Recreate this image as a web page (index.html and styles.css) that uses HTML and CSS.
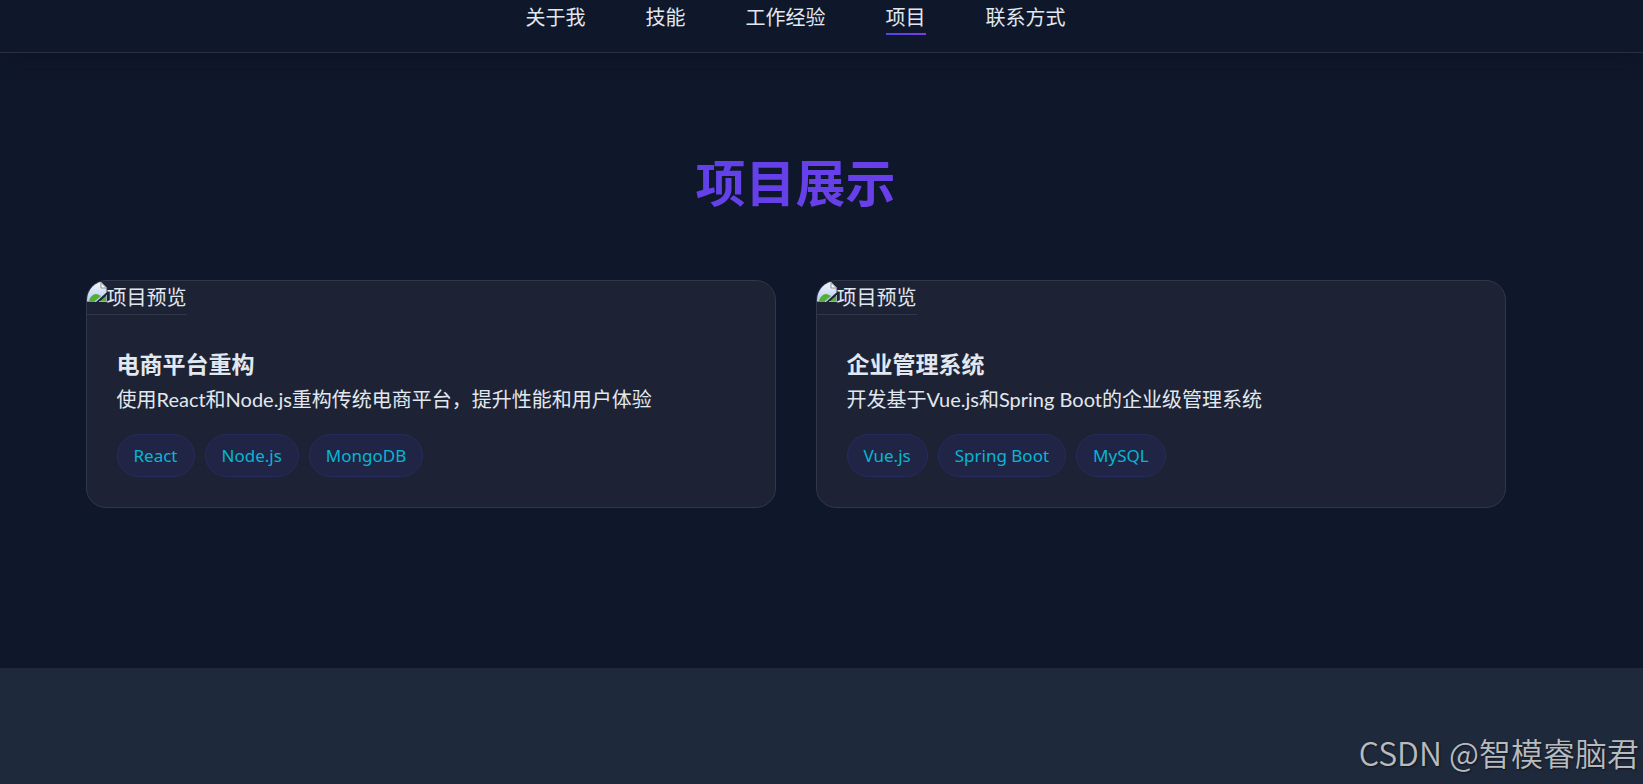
FILE: index.html
```
<!DOCTYPE html>
<html lang="zh-CN">
<head>
    <meta charset="UTF-8">
    <meta name="viewport" content="width=device-width, initial-scale=1.0">
    <title>项目展示</title>
    <link rel="stylesheet" href="styles.css">
</head>
<body>

<!-- 导航栏 -->
<header class="header">
    <nav class="nav">
        <a href="#about">关于我</a>
        <a href="#skills">技能</a>
        <a href="#experience">工作经验</a>
        <a href="#projects" class="active">项目</a>
        <a href="#contact">联系方式</a>
    </nav>
</header>

<!-- 项目展示 -->
<main class="section" id="projects">
    <div class="container">
        <h2 class="section-title">项目展示</h2>
        <div class="project-grid">
            <article class="project-card">
                <div class="project-image">
                    <svg class="image-icon" viewBox="0 0 20 20" aria-hidden="true">
                        <defs>
                            <linearGradient id="sky" x1="0" y1="0" x2="0" y2="1">
                                <stop offset="0" stop-color="#f2f6fd"/>
                                <stop offset="1" stop-color="#b5cbf2"/>
                            </linearGradient>
                        </defs>
                        <path d="M0 0h14l6 6v4L9 20H0z" fill="url(#sky)"/>
                        <path d="M2 19c1-4 4-7 7-7 2 0 3 1 5 2l-6 5z" fill="#55ad35"/>
                        <path d="M0 19.500h8" stroke="#8b8f91"/>
                        <path d="M14 .500v5.500h5.500zM19.500 6v4" fill="#fff" stroke="#8b8f91"/>
                        <path d="M20 13v7h-8z" fill="#55ad35"/>
                        <path d="M19.500 13v6.500H12" fill="none" stroke="#a6adad"/>
                    </svg>
                    <span>项目预览</span>
                </div>
                <div class="project-content">
                    <h3>电商平台重构</h3>
                    <p>使用React和Node.js重构传统电商平台，提升性能和用户体验</p>
                    <div class="project-tags">
                        <span class="tag">React</span>
                        <span class="tag">Node.js</span>
                        <span class="tag">MongoDB</span>
                    </div>
                </div>
            </article>

            <article class="project-card">
                <div class="project-image">
                    <svg class="image-icon" viewBox="0 0 20 20" aria-hidden="true">
                        <path d="M0 0h14l6 6v4L9 20H0z" fill="url(#sky)"/>
                        <path d="M2 19c1-4 4-7 7-7 2 0 3 1 5 2l-6 5z" fill="#55ad35"/>
                        <path d="M0 19.500h8" stroke="#8b8f91"/>
                        <path d="M14 .500v5.500h5.500zM19.500 6v4" fill="#fff" stroke="#8b8f91"/>
                        <path d="M20 13v7h-8z" fill="#55ad35"/>
                        <path d="M19.500 13v6.500H12" fill="none" stroke="#a6adad"/>
                    </svg>
                    <span>项目预览</span>
                </div>
                <div class="project-content">
                    <h3>企业管理系统</h3>
                    <p>开发基于Vue.js和Spring Boot的企业级管理系统</p>
                    <div class="project-tags">
                        <span class="tag">Vue.js</span>
                        <span class="tag">Spring Boot</span>
                        <span class="tag">MySQL</span>
                    </div>
                </div>
            </article>
        </div>
    </div>
</main>

<footer class="footer">
    <p class="watermark">CSDN @智模睿脑君</p>
</footer>

</body>
</html>
```
FILE: styles.css
```
* {
    margin: 0;
    padding: 0;
    box-sizing: border-box;
}

body {
    display: flex;
    flex-direction: column;
    min-height: 100vh;
    font-family: "Noto Sans", "Noto Sans CJK SC", sans-serif;
    font-size: 20px;
    line-height: 32px;
    background-color: #0f172a;
    color: #e2e8f0;
}

/* 导航栏 */
.header {
    padding: 3px 52px 17px 0;
    border-bottom: 1px solid #272f40;
    box-shadow: 0 5px 20px rgba(16, 14, 34, 0.4);
}

.nav {
    display: flex;
    justify-content: center;
    gap: 60px;
    line-height: 30px;
}

.nav a {
    border-bottom: 2px solid transparent;
    color: #e2e8f0;
    text-decoration: none;
}

.nav a.active {
    border-image: linear-gradient(90deg, #4f46e5, #7c3aed) 1;
}

/* 项目区域 */
.section {
    padding: 90px 52px 160px 0;
}

.container {
    max-width: 1500px;
    margin: 0 auto;
    padding: 0 40px;
}

.section-title {
    margin-bottom: 57px;
    font-size: 50px;
    line-height: 80px;
    text-align: center;
    background: linear-gradient(135deg, #4f46e5, #7c3aed);
    -webkit-background-clip: text;
    background-clip: text;
    color: transparent;
}

.project-grid {
    display: grid;
    grid-template-columns: repeat(2, 1fr);
    gap: 40px;
}

.project-card {
    overflow: hidden;
    background-color: #1d2334;
    border: 1px solid #2f3848;
    border-radius: 20px;
}

.project-image {
    display: flex;
    width: fit-content;
    padding-top: 1px;
    border-bottom: 1px solid #2f3848;
}

.image-icon {
    width: 20px;
    height: 20px;
}

.project-content {
    padding: 30px;
}

.project-content h3 {
    font-size: 23px;
    line-height: 38px;
}

.project-content p {
    font-family: "Lato", "Noto Sans CJK SC", sans-serif;
}

.project-tags {
    display: flex;
    flex-wrap: wrap;
    gap: 10px;
    margin-top: 19px;
}

.tag {
    padding: 6px 16px;
    font-size: 17px;
    line-height: 29px;
    color: #06b6d4;
    background-color: #212545;
    border: 1px solid #272a60;
    border-radius: 25px;
}

/* 页脚 */
.footer {
    display: flex;
    flex: 1;
    align-items: flex-end;
    justify-content: flex-end;
    padding: 64px 4px 14px;
    background-color: #1e293b;
}

.watermark {
    font-family: "Noto Sans CJK SC", sans-serif;
    font-size: 32px;
    font-weight: 350;
    line-height: 36px;
    color: #b8babd;
    text-shadow: 1px 1px 2px rgba(0, 0, 0, 0.5);
}
```
